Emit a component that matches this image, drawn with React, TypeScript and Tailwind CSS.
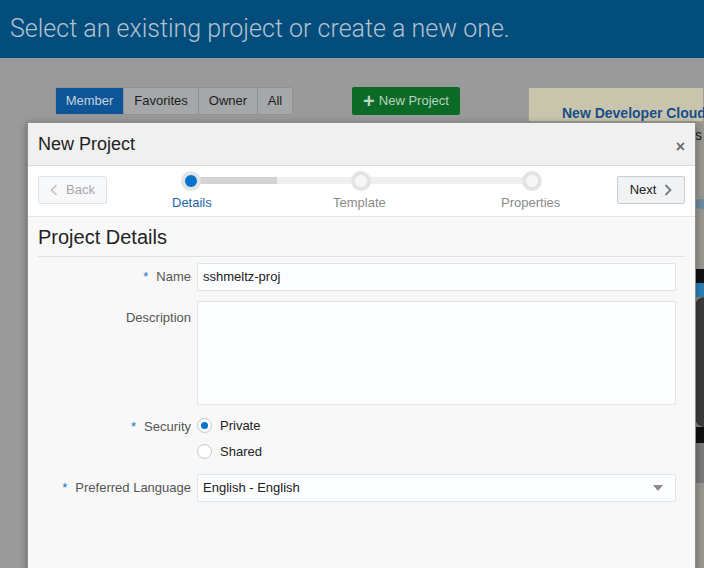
import React from 'react';

const font = { fontFamily: '"Liberation Sans", Arial, sans-serif' };

const Req: React.FC = () => <span className="mr-[8px] text-[13px] text-[#1f6fc0]">*</span>;

const Step: React.FC<{ active?: boolean }> = ({ active }) => (
  <div className="flex h-[20px] w-[20px] items-center justify-center rounded-full bg-[#e4e4e4]">
    <div className={`h-[12px] w-[12px] rounded-full ${active ? 'bg-[#0572ce]' : 'bg-[#f7f7f7]'}`} />
  </div>
);

const App: React.FC = () => {
  return (
    <div className="relative h-[568px] w-[704px] overflow-hidden bg-[#9a9a9a]" style={font}>
      {/* page behind the modal (dimmed) */}
      <div className="flex h-[58px] items-center bg-[#034d7c] pl-[10px]">
        <span className="text-[25px] font-light text-[#b3c2cf]" style={{ fontFamily: 'Roboto, sans-serif' }}>
          Select an existing project or create a new one.
        </span>
      </div>
      <div className="flex pt-[29px]">
        <div className="ml-[55px] flex h-[28px] shrink-0 overflow-hidden rounded-[2px] border border-[#8e9296] text-[13px]">
          <div className="flex w-[67px] items-center justify-center bg-[#0d5596] text-[#c3d2df]">Member</div>
          <div className="flex w-[75px] items-center justify-center border-l border-[#8e9296] bg-[#a5a7a9] text-[#1e1e1e]">Favorites</div>
          <div className="flex w-[59px] items-center justify-center border-l border-[#8e9296] bg-[#a5a7a9] text-[#1e1e1e]">Owner</div>
          <div className="flex w-[35px] items-center justify-center border-l border-[#8e9296] bg-[#a5a7a9] text-[#1e1e1e]">All</div>
        </div>
        <div className="ml-[59px] flex h-[28px] w-[108px] shrink-0 items-center justify-center gap-[4px] rounded-[2px] bg-[#0a6a26] text-[13px] text-[#bcd3c2]">
          <span className="text-[20px] font-bold leading-none">+</span>
          <span>New Project</span>
        </div>
        <div className="ml-[68px] flex h-[481px] min-w-0 flex-1 flex-col bg-[#a6a39a]">
          <div className="h-[35px] whitespace-nowrap border border-[#a09d92] bg-[#c9c5ad] pl-[33px] pt-[15px] text-[14px] font-bold text-[#174f8c]">
            New Developer Cloud
          </div>
          <div className="flex-1 bg-[#9a9890]">
            <div className="ml-[167px] mt-[3px] text-[14px] text-[#222]">s</div>
            <div className="ml-[167px] mt-[53px] h-[10px] w-[12px] rounded-full bg-[#6a8aa0]" />
            <div className="ml-[167px] mt-[60px] h-[14px] bg-[#111]" />
            <div className="ml-[167px] h-[14px] bg-[#2a7fb3]" />
            <div className="ml-[167px] h-[130px] bg-[#8a8a8a]">
              <div className="h-full w-full rounded-l-full bg-[#3b3b3b]" />
            </div>
            <div className="ml-[167px] h-[16px] bg-[#111]" />
            <div className="ml-[167px] h-[40px] bg-[#7b7b7b]" />
          </div>
        </div>
      </div>

      {/* modal dialog */}
      <div className="absolute left-[27px] top-[122px] flex h-[460px] w-[669px] flex-col border border-[#8c8c8c] bg-[#f8f8f8] shadow-[0_2px_8px_rgba(0,0,0,0.35)]">
        <div className="flex h-[43px] items-center justify-between border-b border-[#d5dbe0] bg-[#f0f0f0] pl-[10px] pr-[10px]">
          <span className="text-[18px] text-[#222]">New Project</span>
          <span className="mt-[6px] text-[16px] font-bold text-[#6b6b6b]">×</span>
        </div>

        <div className="flex h-[51px] items-start border-b border-[#e2e6ea] bg-white pl-[10px] pr-[10px] pt-[10px]">
          <div className="flex h-[28px] w-[69px] items-center gap-[8px] rounded-[2px] border border-[#e0e4e7] bg-[#f7f8f9] pl-[11px] text-[13px] text-[#a9a9a9]">
            <svg width="8" height="12" viewBox="0 0 8 12"><path d="M6.5 1 L1.5 6 L6.5 11" fill="none" stroke="#c2c2c2" strokeWidth="1.6" /></svg>
            <span>Back</span>
          </div>
          <div className="relative ml-[4px] h-[40px] w-[490px]">
            <div className="absolute left-[76px] top-[1px] h-[7px] w-[340px] bg-[#efefef]" />
            <div className="absolute left-[76px] top-[1px] h-[7px] w-[90px] bg-[#d3d3d3]" />
            <div className="absolute left-[70px] top-[-5px]"><Step active /></div>
            <div className="absolute left-[240px] top-[-5px]"><Step /></div>
            <div className="absolute left-[411px] top-[-5px]"><Step /></div>
            <span className="absolute left-[61px] top-[17px] text-[13px] text-[#1d64a8]">Details</span>
            <span className="absolute left-[222px] top-[17px] text-[13px] text-[#8a8a8a]">Template</span>
            <span className="absolute left-[390px] top-[17px] text-[13px] text-[#8a8a8a]">Properties</span>
          </div>
          <div className="ml-auto flex h-[28px] w-[68px] items-center justify-center gap-[8px] rounded-[2px] border border-[#c9cdd1] bg-[#f1f2f4] text-[13px] text-[#222]">
            <span>Next</span>
            <svg width="8" height="12" viewBox="0 0 8 12"><path d="M1.5 1 L6.5 6 L1.5 11" fill="none" stroke="#7a7a7a" strokeWidth="1.8" /></svg>
          </div>
        </div>

        <div className="flex flex-col pl-[10px] pr-[10px]">
          <div className="border-b border-[#dde2e6] pb-[4px] pt-[5px] text-[20px] text-[#222]">Project Details</div>

          <div className="mt-[6px] flex items-center">
            <div className="flex w-[153px] items-center justify-end text-[13px] text-[#555]"><Req />Name</div>
            <div className="ml-[6px] flex h-[28px] w-[479px] items-center rounded-[2px] border border-[#dfe4e8] bg-[#fcfdfe] pl-[5px] text-[13px] text-[#222]">
              sshmeltz-proj
            </div>
          </div>

          <div className="mt-[10px] flex items-start">
            <div className="w-[153px] pt-[7px] text-right text-[13px] text-[#555]">Description</div>
            <div className="ml-[6px] h-[104px] w-[479px] rounded-[2px] border border-[#dfe4e8] bg-[#fcfdfe]" />
          </div>

          <div className="mt-[11px] flex items-start">
            <div className="flex w-[153px] items-center justify-end pt-[1px] text-[13px] text-[#555]"><Req />Security</div>
            <div className="ml-[6px] flex flex-col gap-[6px] text-[13px] text-[#222]">
              <div className="flex items-center gap-[8px]">
                <div className="flex h-[15px] w-[15px] items-center justify-center rounded-full border border-[#c4c9cd] bg-white">
                  <div className="h-[7px] w-[7px] rounded-full bg-[#0572ce]" />
                </div>
                <span>Private</span>
              </div>
              <div className="flex items-center gap-[8px]">
                <div className="h-[15px] w-[15px] rounded-full border border-[#c4c9cd] bg-white" />
                <span>Shared</span>
              </div>
            </div>
          </div>

          <div className="mt-[13px] flex items-center">
            <div className="flex w-[153px] items-center justify-end text-[13px] text-[#555]"><Req />Preferred Language</div>
            <div className="ml-[6px] flex h-[28px] w-[479px] items-center justify-between rounded-[2px] border border-[#dfe4e8] bg-[#fcfdfe] pl-[5px] pr-[12px] text-[13px] text-[#222]">
              <span>English - English</span>
              <svg width="10" height="6" viewBox="0 0 10 6"><path d="M0 0 H10 L5 6 Z" fill="#8a8a8a" /></svg>
            </div>
          </div>
        </div>
      </div>
    </div>
  );
};

export default App;
